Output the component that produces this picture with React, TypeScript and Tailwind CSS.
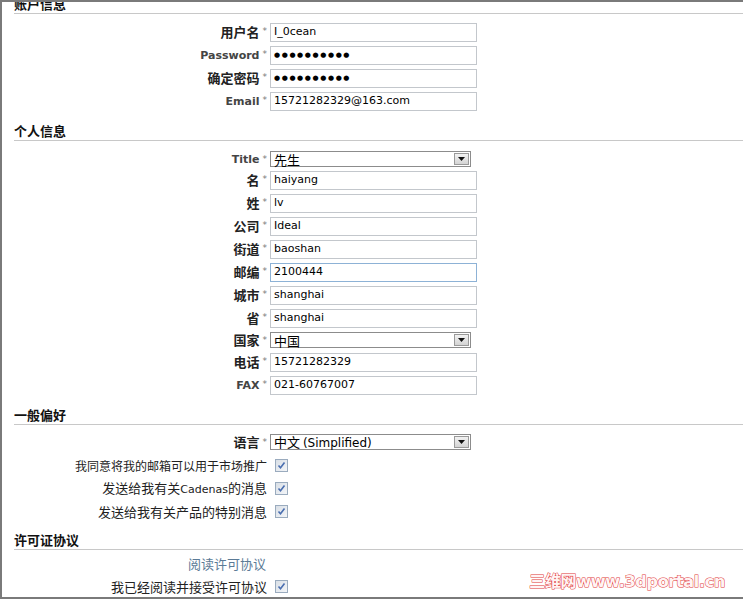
import React from "react";

const cjk = "font-['Noto_Sans_CJK_SC',sans-serif]";
const latin = "font-['DejaVu_Sans','Noto_Sans_CJK_SC',sans-serif]";

function Star() {
  return <span className={`ml-[3px] self-start pt-[4px] text-[9px] leading-none text-[#7a7a7a] ${latin}`}>*</span>;
}

function LabelText({ text, en }: { text: string; en?: boolean }) {
  return (
    <span
      className={
        en
          ? `text-[11px] font-bold leading-[19px] text-[#444] ${latin}`
          : `-translate-y-[1px] text-[13px] font-bold leading-[19px] text-[#222] ${cjk}`
      }
    >
      {text}
    </span>
  );
}

function Field({ label, value, en, password, focus }: { label: string; value: string; en?: boolean; password?: boolean; focus?: boolean }) {
  return (
    <div className="flex h-[23px] items-start">
      <div className="flex h-[19px] w-[253px] shrink-0 items-center justify-end">
        <LabelText text={label} en={en} />
        <Star />
      </div>
      <div
        className={`ml-[3px] flex h-[19px] w-[207px] items-center border bg-white pl-[3px] text-[11px] text-black ${latin} ${
          focus ? "border-[#8db2d6]" : "border-[#c3c7cc]"
        }`}
      >
        {password ? <span className="text-[7px] tracking-[1.6px]">●●●●●●●●●●</span> : value}
      </div>
    </div>
  );
}

function SelectField({ label, value, en, rowClass }: { label: string; value: React.ReactNode; en?: boolean; rowClass: string }) {
  return (
    <div className={`flex items-start ${rowClass}`}>
      <div className="flex h-[16px] w-[253px] shrink-0 items-center justify-end">
        <LabelText text={label} en={en} />
        <Star />
      </div>
      <div className={`ml-[3px] flex h-[16px] w-[201px] items-center justify-between border border-[#8c8c8c] bg-white pl-[3px] text-[13px] leading-none text-black ${cjk}`}>
        <span className="whitespace-pre">{value}</span>
        <div className="mr-[1px] flex h-[12px] w-[15px] items-center justify-center border border-[#9a9a9a] bg-[linear-gradient(#f2f2f2,#d4d4d4)]">
          <svg width="7" height="4" viewBox="0 0 7 4">
            <path d="M0 0h7L3.5 4z" fill="#111" />
          </svg>
        </div>
      </div>
    </div>
  );
}

function Check() {
  return (
    <div className="flex h-[13px] w-[13px] items-center justify-center border border-[#9aabbe] bg-[linear-gradient(135deg,#d9dfe6,#f3f5f8)]">
      <svg width="9" height="9" viewBox="0 0 9 9">
        <path d="M1.5 4.5 L3.5 6.8 L7.5 1.5" fill="none" stroke="#4a6eb0" strokeWidth="1.6" />
      </svg>
    </div>
  );
}

function CheckRow({ children, small }: { children: React.ReactNode; small?: boolean }) {
  return (
    <div className="flex h-[23px] items-center">
      <div className={`w-[253px] shrink-0 text-right text-[#222] ${small ? "text-[12px]" : "text-[13px]"} ${cjk}`}>{children}</div>
      <div className="ml-[8px]">
        <Check />
      </div>
    </div>
  );
}

function Heading({ text, className }: { text: string; className: string }) {
  return (
    <div className={`h-[20px] border-b border-[#c8c8c8] text-[13px] font-bold leading-[19px] text-[#111] ${cjk} ${className}`}>{text}</div>
  );
}

export default function App() {
  return (
    <div className="relative h-[599px] w-[743px] overflow-hidden border-b-2 border-l-2 border-t-2 border-[#7a7a7a] bg-white">
      <div className="pl-[12px]">
        <Heading text="账户信息" className="-mt-[8px]" />
        <div className="mt-[9px]">
          <Field label="用户名" value="I_0cean" />
          <Field label="Password" value="" en password />
          <Field label="确定密码" value="" password />
          <Field label="Email" value="15721282329@163.com" en />
        </div>

        <Heading text="个人信息" className="mt-[6px]" />
        <div className="mt-[10px]">
          <SelectField label="Title" value="先生" en rowClass="h-[20px]" />
          <Field label="名" value="haiyang" />
          <Field label="姓" value="lv" />
          <Field label="公司" value="Ideal" />
          <Field label="街道" value="baoshan" />
          <Field label="邮编" value="2100444" focus />
          <Field label="城市" value="shanghai" />
          <Field label="省" value="shanghai" />
          <SelectField label="国家" value="中国" rowClass="h-[21px]" />
          <Field label="电话" value="15721282329" />
          <Field label="FAX" value="021-60767007" en />
        </div>

        <Heading text="一般偏好" className="mt-[6px]" />
        <div className="mt-[9px]">
          <SelectField
            label="语言"
            value={
              <>
                中文 <span className={`text-[12px] ${latin}`}>(Simplified)</span>
              </>
            }
            rowClass="h-[20px]"
          />
          <CheckRow small>我同意将我的邮箱可以用于市场推广</CheckRow>
          <CheckRow>
            发送给我有关<span className={`text-[11px] ${latin}`}>Cadenas</span>的消息
          </CheckRow>
          <CheckRow>发送给我有关产品的特别消息</CheckRow>
        </div>

        <Heading text="许可证协议" className="mt-[7px]" />
        <div className="mt-[3px]">
          <div className="flex h-[22px] items-center">
            <div className={`w-[253px] pr-[1px] text-right text-[13px] text-[#5b7a96] ${cjk}`}>阅读许可协议</div>
          </div>
          <CheckRow>我已经阅读并接受许可协议</CheckRow>
        </div>
      </div>

      <div
        className={`absolute bottom-[3px] right-[18px] text-[16px] font-bold tracking-[-0.3px] text-[#fff4f4] [-webkit-text-stroke:1px_#e03a3a] [paint-order:stroke_fill] ${latin}`}
      >
        三维网www.3dportal.cn
      </div>
    </div>
  );
}
